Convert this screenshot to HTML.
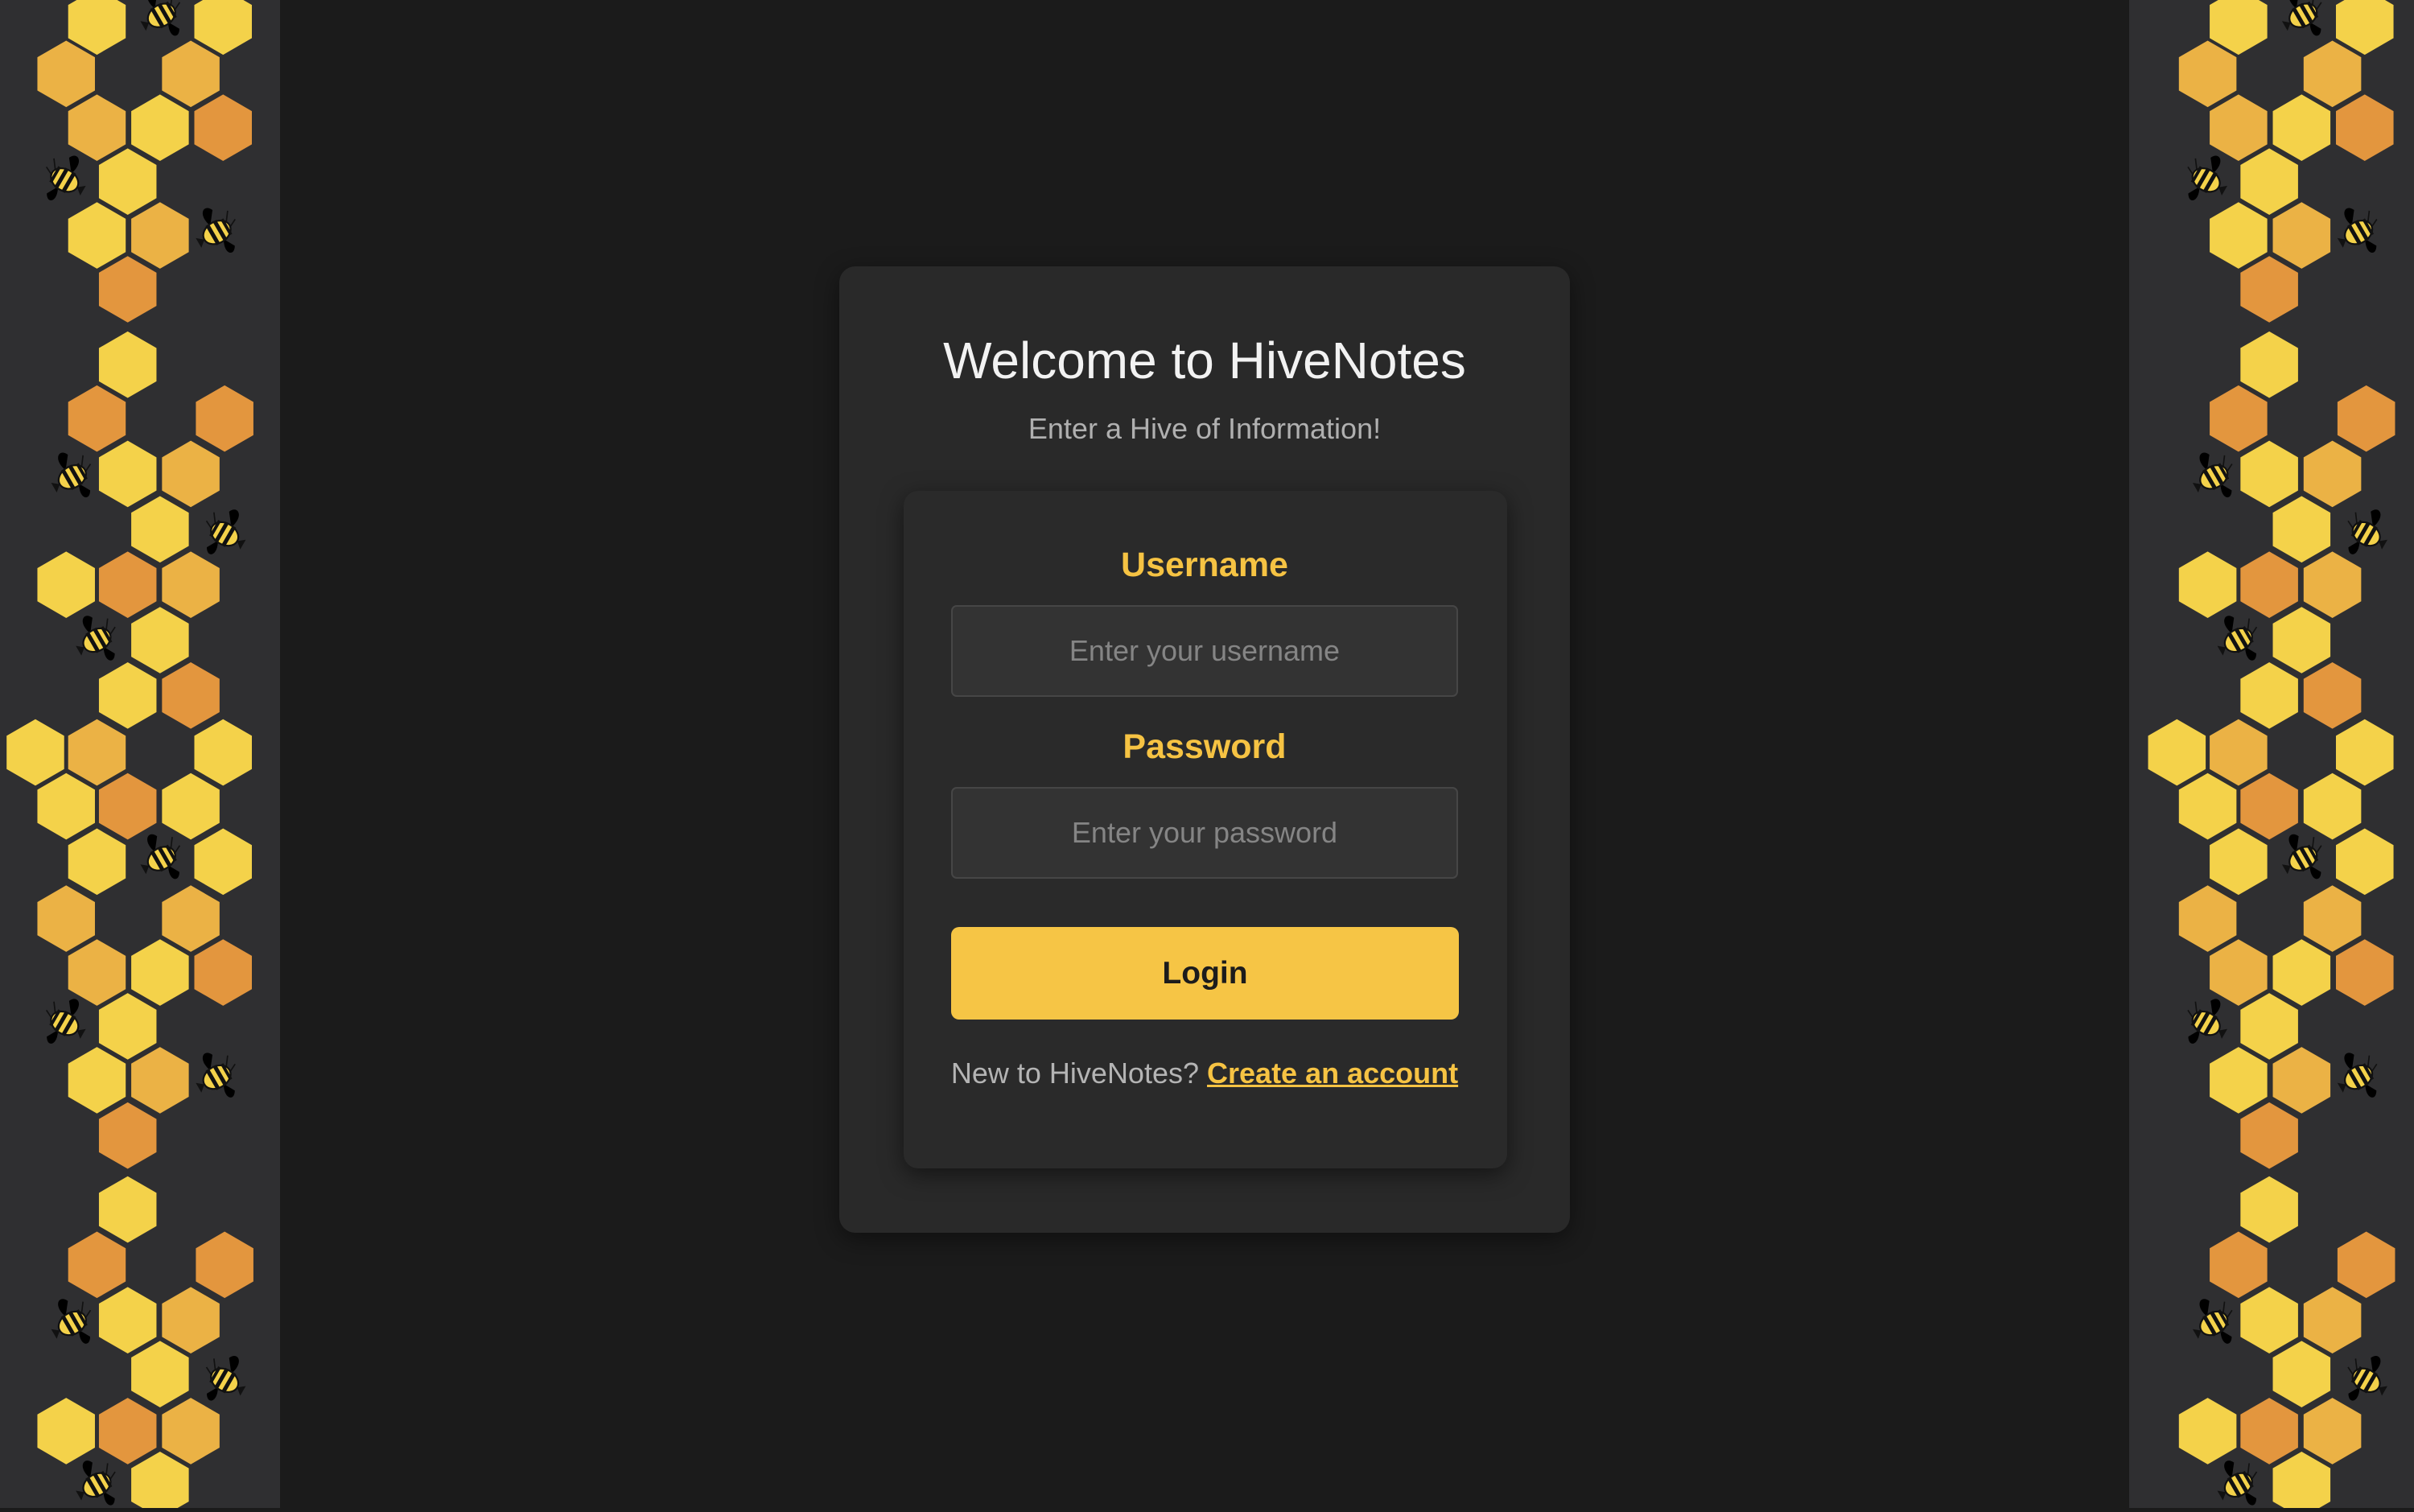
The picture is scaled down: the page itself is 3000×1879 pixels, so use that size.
<!DOCTYPE html>
<html><head><meta charset="utf-8">
<style>
html,body{margin:0;padding:0;width:3000px;height:1874px;overflow:hidden;background:#1b1b1b;font-family:"Liberation Sans",Arial,sans-serif;}
.side{position:absolute;top:0;height:1874px;background:#2f2f31;}
.card{position:absolute;left:1043px;top:331px;width:908px;height:1201px;background:#292929;border-radius:20px;box-shadow:0 8px 30px rgba(0,0,0,.45);}
.inner{position:absolute;left:1123px;top:610px;width:750px;height:842px;background:#2a2a2a;border-radius:18px;box-shadow:0 8px 28px rgba(0,0,0,.5);}
.t{position:absolute;left:1043px;width:908px;text-align:center;white-space:nowrap;}
.inp{position:absolute;left:1182px;width:630px;background:#333;border:2px solid #464646;border-radius:7px;color:#858585;font-size:36px;text-align:center;box-sizing:border-box;}
.btn{position:absolute;left:1182px;top:1152px;width:631px;height:115px;background:#f6c545;border-radius:10px;color:#1c1c1c;font-weight:bold;font-size:39px;text-align:center;line-height:115px;}
</style></head><body>
<svg width="0" height="0" style="position:absolute">
<defs>
<polygon id="h" points="0,-21.6 18.7,-10.8 18.7,10.8 0,21.6 -18.7,10.8 -18.7,-10.8"/>
<g id="bee" transform="scale(1.45)">
<path d="M-3,-3 C-9,-8 -6,-13 -2,-10 Z" fill="#000"/>
<path d="M3,3 C3,10 8,11 8,6 Z" fill="#000"/>
<g transform="rotate(-30)">
<ellipse cx="0" cy="0" rx="6.5" ry="4.8" fill="#f4d24a" stroke="#111" stroke-width="0.8"/>
<rect x="-3" y="-5" width="1.8" height="10" fill="#111"/>
<rect x="0.7" y="-5" width="1.8" height="10" fill="#111"/>
<rect x="4.2" y="-4" width="1.4" height="8" fill="#111"/>
<path d="M6,-2 l3,-4 M6,1 l4,-2" stroke="#111" stroke-width="0.6" fill="none"/>
<path d="M-6.5,0 l-3,-2.5 l0,5 z" fill="#111"/>
</g>
</g>
<g id="hexes">
<use href="#h" x="63" y="14" fill="#f4d24a"/><use href="#h" x="145" y="14" fill="#f4d24a"/>
<use href="#h" x="43" y="48" fill="#ebb245"/><use href="#h" x="124" y="48" fill="#ebb245"/>
<use href="#h" x="63" y="83" fill="#ebb245"/><use href="#h" x="104" y="83" fill="#f4d24a"/><use href="#h" x="145" y="83" fill="#e3963e"/>
<use href="#h" x="83" y="118" fill="#f4d24a"/>
<use href="#h" x="63" y="153" fill="#f4d24a"/><use href="#h" x="104" y="153" fill="#ebb245"/>
<use href="#h" x="83" y="188" fill="#e3963e"/>
<use href="#h" x="83" y="237" fill="#f4d24a"/>
<use href="#h" x="63" y="272" fill="#e3963e"/><use href="#h" x="146" y="272" fill="#e3963e"/>
<use href="#h" x="83" y="308" fill="#f4d24a"/><use href="#h" x="124" y="308" fill="#ebb245"/>
<use href="#h" x="104" y="344" fill="#f4d24a"/>
<use href="#h" x="43" y="380" fill="#f4d24a"/><use href="#h" x="83" y="380" fill="#e3963e"/><use href="#h" x="124" y="380" fill="#ebb245"/>
<use href="#h" x="104" y="416" fill="#f4d24a"/>
<use href="#h" x="83" y="452" fill="#f4d24a"/><use href="#h" x="124" y="452" fill="#e3963e"/>
<use href="#h" x="23" y="489" fill="#f4d24a"/><use href="#h" x="63" y="489" fill="#ebb245"/><use href="#h" x="145" y="489" fill="#f4d24a"/>
<use href="#h" x="43" y="524" fill="#f4d24a"/><use href="#h" x="83" y="524" fill="#e3963e"/><use href="#h" x="124" y="524" fill="#f4d24a"/>
<use href="#h" x="63" y="560" fill="#f4d24a"/><use href="#h" x="145" y="560" fill="#f4d24a"/>
<use href="#h" x="43" y="597" fill="#ebb245"/><use href="#h" x="124" y="597" fill="#ebb245"/>
<use href="#h" x="63" y="632" fill="#ebb245"/><use href="#h" x="104" y="632" fill="#f4d24a"/><use href="#h" x="145" y="632" fill="#e3963e"/>
<use href="#h" x="83" y="667" fill="#f4d24a"/>
<use href="#h" x="63" y="702" fill="#f4d24a"/><use href="#h" x="104" y="702" fill="#ebb245"/>
<use href="#h" x="83" y="738" fill="#e3963e"/>
<use href="#h" x="83" y="786" fill="#f4d24a"/>
<use href="#h" x="63" y="822" fill="#e3963e"/><use href="#h" x="146" y="822" fill="#e3963e"/>
<use href="#h" x="83" y="858" fill="#f4d24a"/><use href="#h" x="124" y="858" fill="#ebb245"/>
<use href="#h" x="104" y="893" fill="#f4d24a"/>
<use href="#h" x="43" y="930" fill="#f4d24a"/><use href="#h" x="83" y="930" fill="#e3963e"/><use href="#h" x="124" y="930" fill="#ebb245"/>
<use href="#h" x="104" y="965" fill="#f4d24a"/>
<use href="#bee" transform="translate(105,10)"/>
<use href="#bee" transform="translate(42,117) scale(-1,1)"/>
<use href="#bee" transform="translate(141,151)"/>
<use href="#bee" transform="translate(47,310)"/>
<use href="#bee" transform="translate(146,347) scale(-1,1)"/>
<use href="#bee" transform="translate(63,416)"/>
<use href="#bee" transform="translate(105,558)"/>
<use href="#bee" transform="translate(42,665) scale(-1,1)"/>
<use href="#bee" transform="translate(141,700)"/>
<use href="#bee" transform="translate(47,860)"/>
<use href="#bee" transform="translate(146,897) scale(-1,1)"/>
<use href="#bee" transform="translate(63,965)"/>
</g>
</defs></svg>

<div class="side" style="left:0;width:348px;">
<svg width="348" height="1874" viewBox="0 0 182 980" preserveAspectRatio="none"><use href="#hexes"/></svg>
</div>
<div class="side" style="left:2646px;width:354px;">
<svg width="354" height="1874" viewBox="-8 0 185 980" preserveAspectRatio="none"><use href="#hexes"/></svg>
</div>

<div class="card"></div>
<div class="t" style="top:410px;font-size:64px;color:#f2f2f2;line-height:76px;">Welcome to HiveNotes</div>
<div class="t" style="top:512px;font-size:36px;color:#b0b0b0;line-height:42px;">Enter a Hive of Information!</div>
<div class="inner"></div>
<div class="t" style="top:678px;font-size:43px;font-weight:bold;color:#f6c343;line-height:48px;">Username</div>
<div class="inp" style="top:752px;height:114px;line-height:110px;">Enter your username</div>
<div class="t" style="top:904px;font-size:43px;font-weight:bold;color:#f6c343;line-height:48px;">Password</div>
<div class="inp" style="top:978px;height:114px;line-height:110px;">Enter your password</div>
<div class="btn">Login</div>
<div class="t" style="top:1313px;font-size:36px;color:#b4b4b4;line-height:42px;">New to HiveNotes? <span style="color:#f6c343;font-weight:bold;text-decoration:underline;">Create an account</span></div>
</body></html>
